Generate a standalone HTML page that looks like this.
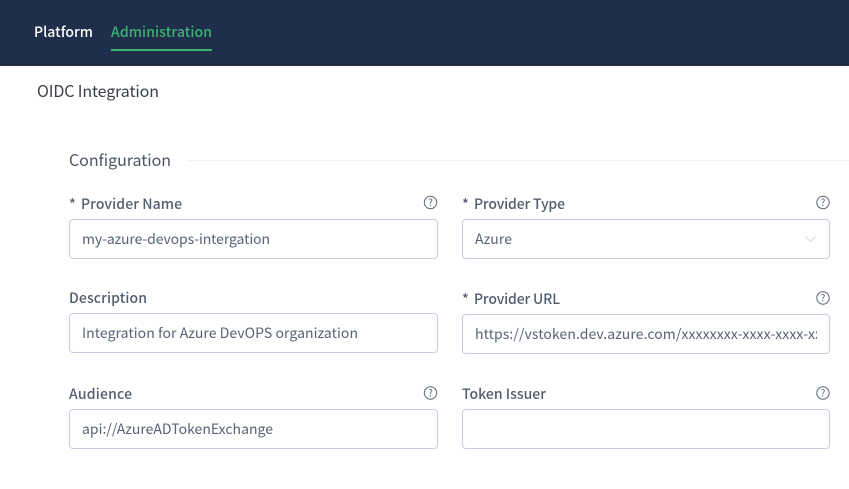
<!DOCTYPE html>
<html><head><meta charset="utf-8">
<style>
html,body{margin:0;padding:0;background:#fff;width:849px;height:489px;overflow:hidden}
svg{display:block}
text{font-family:"Noto Sans CJK JP","Liberation Sans",sans-serif}
.l{font-size:14px;font-weight:500;fill:#525d70}
.v{font-size:14px;fill:#586274}
.b{fill:#fff;stroke:#c5cee0;stroke-width:1}
.h circle{fill:none;stroke:#5d6675;stroke-width:1}
.h text{font-size:9.5px;fill:#5d6675;text-anchor:middle}
</style></head><body>
<svg width="849" height="489" viewBox="0 0 849 489" xmlns="http://www.w3.org/2000/svg">
<defs><clipPath id="c"><rect x="475" y="320" width="342" height="30"/></clipPath>
<g id="q" class="h"><circle cx="0" cy="0" r="6.2"/><text x="0" y="3.3">?</text></g></defs>
<rect width="849" height="66" fill="#1f2f4b"/>
<text x="34" y="37" font-size="14" font-weight="500" fill="#fff" textLength="59">Platform</text>
<text x="111" y="37" font-size="14" font-weight="500" fill="#3cb371" textLength="101">Administration</text>
<rect x="111" y="49" width="101" height="2" fill="#3cb371"/>
<text x="37" y="97" font-size="16" fill="#3c4148" textLength="122">OIDC Integration</text>
<text x="69" y="166" font-size="16" fill="#4c5566" textLength="102">Configuration</text>
<rect x="187" y="160" width="662" height="1" fill="#f0f0f8"/>

<text class="l" x="69" y="209">*</text><text class="l" x="81" y="209" textLength="101">Provider Name</text>
<text class="l" x="462" y="209">*</text><text class="l" x="474" y="209" textLength="91">Provider Type</text>
<text class="l" x="69" y="303" textLength="78">Description</text>
<text class="l" x="462" y="304">*</text><text class="l" x="474" y="304" textLength="86">Provider URL</text>
<text class="l" x="69" y="399" textLength="63">Audience</text>
<text class="l" x="462" y="399" textLength="84">Token Issuer</text>

<rect class="b" x="69.5" y="219.5" width="368" height="39" rx="3.5"/>
<rect class="b" x="462.5" y="219.5" width="367" height="39" rx="3.5"/>
<rect class="b" x="69.5" y="313.5" width="368" height="39" rx="3.5"/>
<rect class="b" x="462.5" y="314.5" width="367" height="39" rx="3.5"/>
<rect class="b" x="69.5" y="409.5" width="368" height="39" rx="3.5"/>
<rect class="b" x="462.5" y="409.5" width="367" height="39" rx="3.5"/>

<text class="v" x="82" y="244" textLength="188">my-azure-devops-intergation</text>
<text class="v" x="475" y="244" textLength="37">Azure</text>
<path d="M805.5 236.5l5 5 5-5" fill="none" stroke="#d3d8e0" stroke-width="1"/>
<text class="v" x="82" y="338" textLength="276">Integration for Azure DevOPS organization</text>
<g clip-path="url(#c)"><text class="v" x="475" y="339" textLength="347">https://vstoken.dev.azure.com/xxxxxxxx-xxxx-xxxx-xx</text></g>
<text class="v" x="82" y="434" textLength="191">api://AzureADTokenExchange</text>

<use href="#q" x="430.5" y="202.5"/>
<use href="#q" x="823" y="202.5"/>
<use href="#q" x="823" y="298"/>
<use href="#q" x="430.5" y="393"/>
<use href="#q" x="823" y="393"/>
</svg>
</body></html>
